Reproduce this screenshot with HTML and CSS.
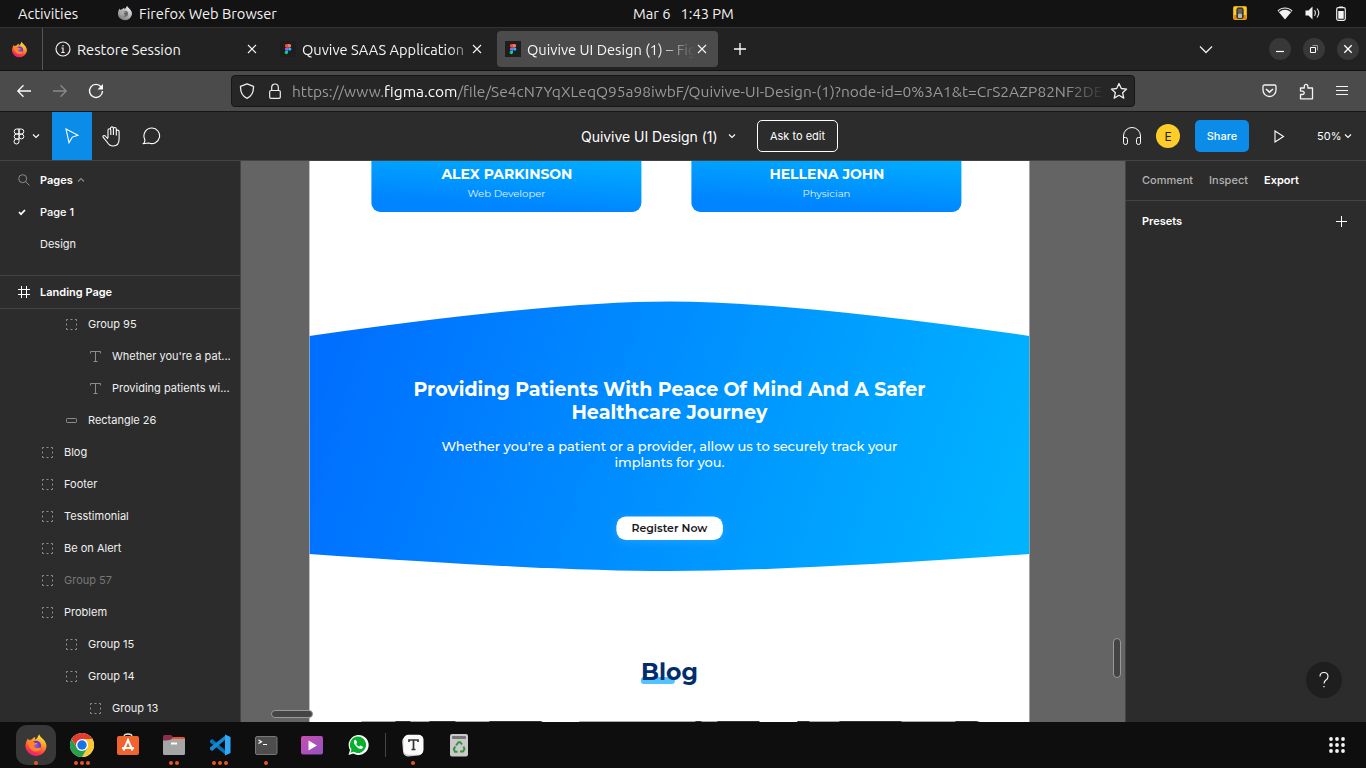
FILE: index.html
```html
<!DOCTYPE html>
<html lang="en">
<head>
<meta charset="utf-8">
<title>Quivive UI Design (1) – Figma</title>
<link rel="stylesheet" href="styles.css">
</head>
<body>
<svg width="0" height="0" class="defs" aria-hidden="true">
  <defs>
    <linearGradient id="fox" x1=".75" y1="0" x2=".3" y2="1"><stop offset="0" stop-color="#fff14a"/><stop offset=".4" stop-color="#ff9a1f"/><stop offset=".75" stop-color="#ff3a46"/><stop offset="1" stop-color="#e5178f"/></linearGradient>
    <linearGradient id="foxGrey" x1=".8" y1="0" x2=".2" y2="1"><stop offset="0" stop-color="#f4f4f4"/><stop offset="1" stop-color="#777"/></linearGradient>
    <radialGradient id="globe"><stop offset="0" stop-color="#9059ff"/><stop offset="1" stop-color="#5b33b8"/></radialGradient>
    <linearGradient id="banner" gradientUnits="userSpaceOnUse" x1="20" y1="30" x2="690" y2="255"><stop offset="0" stop-color="#006eff"/><stop offset=".5" stop-color="#0090ff"/><stop offset="1" stop-color="#00b3ff"/></linearGradient>
    <linearGradient id="video" x1="0" y1="0" x2="1" y2="1"><stop offset="0" stop-color="#c84fae"/><stop offset="1" stop-color="#9352c4"/></linearGradient>
    <symbol id="firefox" viewBox="0 0 24 24">
      <path d="M15.200 1.200c.4 1.800 1.700 2.700 3.200 4.200 2.600 2.300 4.100 5 4.100 8.100a10.600 10.300 0 0 1-21.100.2c0-3 .8-6 2.700-8.500l.6 2.200c1-.7 2-1 3.200-.9 1-1.500 2.300-2.200 3.600-2.500-.6 1-.7 1.800-.5 2.600 1.800-.6 2.700-2.800 4.200-5.400z" fill="url(#fox)"/>
      <circle cx="12" cy="12.800" r="5" fill="url(#globe)"/>
      <path d="M3.500 7.500c2.300-.8 5 .6 6.900 1.900 1 .6 2.200.5 3.200.4-.4 1.400-1.800 1.900-3.200 2.200-.6 1.900 1 3.300 3 3 1.600-.3 2.700-.4 3.500.4-1.500 2.700-4.500 3.700-7.600 2.500C5.700 16.300 4 12.500 3.500 7.500z" fill="#ff852b"/>
    </symbol>
    <symbol id="figma" viewBox="0 0 16 16">
      <rect width="16" height="16" fill="#1e1e1e"/>
      <path d="M8 3H6.500a1.700 1.700 0 0 0 0 3.400H8z" fill="#f24e1e"/><path d="M8 3h1.500a1.700 1.700 0 0 1 0 3.400H8z" fill="#ff7262"/>
      <path d="M8 6.400H6.500a1.700 1.700 0 0 0 0 3.400H8z" fill="#a259ff"/><circle cx="9.700" cy="8.100" r="1.700" fill="#1abcfe"/>
      <path d="M8 9.800H6.500A1.700 1.700 0 1 0 8 11.500z" fill="#0acf83"/>
    </symbol>
    <symbol id="close" viewBox="0 0 10 10"><path d="M1 1l8 8M9 1L1 9" fill="none" stroke="currentColor" stroke-width="1.100"/></symbol>
    <symbol id="chev" viewBox="0 0 8 6"><path d="M1 1.500l3 3 3-3" fill="none" stroke="currentColor" stroke-width="1.100"/></symbol>
    <symbol id="group" viewBox="0 0 11 11"><path d="M.5 2V.5H2M4.500 .5h2M9 .5h1.500V2M10.500 4.500v2M10.500 9v1.500H9M6.500 10.500h-2M2 10.500H.5V9M.5 6.500v-2" fill="none" stroke="#8c8c8c"/></symbol>
    <symbol id="text" viewBox="0 0 11 11"><path d="M.5 2.500v-2h10v2M5.500.5v10M3.500 10.500h4" fill="none" stroke="#8c8c8c"/></symbol>
  </defs>
</svg>

<header class="system">
  <span class="activities">Activities</span>
  <svg class="app-icon" width="16" height="16" viewBox="0 0 24 24"><path d="M15.200 1.200c.4 1.800 1.700 2.700 3.200 4.200 2.600 2.300 4.100 5 4.100 8.100a10.600 10.300 0 0 1-21.100.2c0-3 .8-6 2.700-8.500l.6 2.200c1-.7 2-1 3.200-.9 1-1.500 2.300-2.200 3.600-2.500-.6 1-.7 1.800-.5 2.600 1.800-.6 2.700-2.800 4.200-5.400z" fill="url(#foxGrey)"/><circle cx="12" cy="13" r="4.500" fill="#666"/><path d="M4 8.500c2.300-.8 4.600-.4 6.400.9 1 .6 2.200.5 3.200.4-.4 1.400-1.800 1.900-3.200 2.200-.6 1.900 1 3.300 3 3-5 3-9-1-9.400-6.500z" fill="#aaa"/></svg>
  <span class="app-name">Firefox Web Browser</span>
  <span class="clock">Mar 6&nbsp;&nbsp; 1:43 PM</span>
  <div class="tray">
    <svg width="14" height="14" viewBox="0 0 14 14"><rect width="14" height="14" rx="2" fill="#e9a511"/><path d="M1 1h3v12H1zM10 1h3v12h-3z" fill="#f5cf22"/><path d="M1 9h3v4H1zM10 9h3v4h-3z" fill="#e08a10"/><rect x="3.300" y="1.500" width="7.400" height="11.500" rx="2.500" fill="#3d3938"/><path d="M5 4h4M5 6h4" stroke="#888"/><rect x="5" y="7.500" width="4" height="4.500" rx="1" fill="#b9b9b9"/></svg>
    <svg class="wifi" width="16" height="13" viewBox="0 0 16 13"><path d="M.5 3.500C5-.5 11-.5 15.500 3.500L8 12.500z" fill="#f2f2f2"/><path d="M1.800 4.500C5.500 1.600 10.500 1.600 14.200 4.500" fill="none" stroke="#222" stroke-width="1.500"/></svg>
    <svg class="vol" width="16" height="14" viewBox="0 0 16 14"><path d="M.5 4.500h3L7.500.5v13L3.500 9.500h-3z" fill="#f2f2f2"/><path d="M9.500 4.200q1.800 2.800 0 5.600M12 2.500q3.500 4.500 0 9" fill="none" stroke="#ddd" stroke-width="1.200"/></svg>
    <svg class="bat" width="10" height="15" viewBox="0 0 10 15"><rect x=".7" y="1.700" width="8.600" height="12.600" rx="1.500" fill="none" stroke="#eee" stroke-width="1.200"/><path d="M3 .5h4v1.500H3zM2.300 5h5.400v7.700H2.300z" fill="#f4f4f4"/></svg>
  </div>
</header>

<nav class="tabs">
  <div class="pinned"><svg width="17" height="17"><use href="#firefox"/></svg></div>
  <div class="tab tab-a">
    <svg width="16" height="16" viewBox="0 0 16 16"><circle cx="8" cy="8" r="7" fill="none" stroke="#f0f0f0" stroke-width="1.200"/><path d="M6.300 7H8v4.200M6.300 11.500h3.400M8 4v1.500" stroke="#f0f0f0" stroke-width="1.200" fill="none"/></svg>
    <span class="tab-title">Restore Session</span>
    <svg width="10" height="10"><use href="#close"/></svg>
  </div>
  <div class="tab tab-b">
    <svg width="16" height="16"><use href="#figma"/></svg>
    <span class="tab-title fade">Quvive SAAS Application</span>
    <svg width="10" height="10"><use href="#close"/></svg>
  </div>
  <div class="tab tab-c">
    <svg width="16" height="16"><use href="#figma"/></svg>
    <span class="tab-title fade-long">Quivive UI Design (1) – Figma</span>
    <svg width="10" height="10"><use href="#close"/></svg>
  </div>
  <svg class="new-tab" width="12" height="12" viewBox="0 0 12 12"><path d="M6 0v12M0 6h12" stroke="#fff" stroke-width="1.300"/></svg>
  <svg class="all-tabs" width="14" height="9" viewBox="0 0 14 9"><path d="M1 1.500l6 6 6-6" fill="none" stroke="#eee" stroke-width="1.300"/></svg>
  <div class="win-buttons">
    <i><svg width="22" height="22"><path d="M7 13.500h8" stroke="#fff" stroke-width="1.200"/></svg></i>
    <i><svg width="22" height="22"><path d="M7.500 9.500h5v5h-5z" fill="none" stroke="#fff"/><path d="M9.500 7.500h5v5" fill="none" stroke="#999"/></svg></i>
    <i><svg width="22" height="22"><path d="M7.300 7.300l7.400 7.400M14.700 7.300l-7.400 7.400" stroke="#fff" stroke-width="1.300"/></svg></i>
  </div>
</nav>

<div class="address-bar">
  <div class="nav-buttons">
    <svg width="16" height="14" viewBox="0 0 16 14"><path d="M15 7H2M7.500 1.300L1.800 7l5.700 5.700" fill="none" stroke="#fbfbfe" stroke-width="1.300"/></svg>
    <svg width="16" height="14" viewBox="0 0 16 14"><path d="M1 7h13M8.500 1.300L14.200 7l-5.700 5.700" fill="none" stroke="#8a8a8a" stroke-width="1.300"/></svg>
    <svg width="16" height="16" viewBox="0 0 16 16"><path d="M13.200 4A6.500 6.500 0 1 0 14.500 8" fill="none" stroke="#fbfbfe" stroke-width="1.400"/><path d="M15 1v5.500H9.500z" fill="#fbfbfe"/></svg>
  </div>
  <div class="url">
    <svg width="16" height="16" viewBox="0 0 16 16"><path d="M8 .8l6.500 2.500c.2 6-1.800 10-6.500 12-4.700-2-6.700-6-6.500-12z" fill="none" stroke="#eee" stroke-width="1.300" stroke-linejoin="round"/></svg>
    <svg class="lock" width="14" height="16" viewBox="0 0 14 16"><rect x="1.700" y="7.500" width="10.600" height="7.800" rx="1.300" fill="none" stroke="#eee" stroke-width="1.200"/><path d="M3.700 7.500V4.300a3.300 3.300 0 0 1 6.600 0v3.200" fill="none" stroke="#eee" stroke-width="1.200"/></svg>
    <span class="url-text">https://www.<b>figma.com</b>/file/Se4cN7YqXLeqQ95a98iwbF/Quivive-UI-Design-(1)?node-id=0%3A1&amp;t=CrS2AZP82NF2DE</span>
    <svg width="18" height="18" viewBox="0 0 18 18"><path d="M9 1.500l2.300 5 5.300.6-4 3.600 1.200 5.400L9 13.300l-4.800 2.800 1.200-5.400-4-3.600 5.300-.6z" fill="none" stroke="#eee" stroke-width="1.300" stroke-linejoin="round"/></svg>
  </div>
  <div class="ff-actions">
    <svg width="15" height="14" viewBox="0 0 15 14"><path d="M2.500 1h10q1.500 0 1.500 1.500V6A6.500 6.500 0 0 1 1 6V2.500Q1 1 2.500 1z" fill="none" stroke="#f4f4f4" stroke-width="1.300"/><path d="M4 5l3.500 3.200L11 5" fill="none" stroke="#f4f4f4" stroke-width="1.600"/></svg>
    <svg width="15" height="17" viewBox="0 0 15 17"><path d="M1.500 5h3.800V3.200a1.800 1.800 0 0 1 3.600 0V5H13.500v10.800H1.500v-4.300h2a1.700 1.700 0 0 0 0-3.400H1.500z" fill="none" stroke="#f4f4f4" stroke-width="1.300" stroke-linejoin="round"/></svg>
    <svg width="12" height="12" viewBox="0 0 12 12"><path d="M0 1.500h12M0 5.500h12M0 9.500h12" stroke="#f4f4f4" stroke-width="1.200"/></svg>
  </div>
</div>

<div class="toolbar">
  <div class="menu-tool">
    <svg width="12" height="17" viewBox="0 0 12 17"><path d="M6 1H3.700a2.500 2.500 0 0 0 0 5H6zM6 1h2.300a2.500 2.500 0 0 1 0 5H6zM6 6H3.700a2.500 2.500 0 0 0 0 5H6zM3.700 11A2.500 2.500 0 1 0 6 13.500V11z" fill="none" stroke="#fff"/><circle cx="8.400" cy="8.500" r="2.400" fill="none" stroke="#fff"/></svg>
    <svg width="8" height="6"><use href="#chev"/></svg>
  </div>
  <div class="move-tool"><svg width="14" height="16" viewBox="0 0 14 16"><path d="M1 1l12 6.300-5.700 1.800L4 14.700z" fill="none" stroke="#fff" stroke-width="1.100"/></svg></div>
  <svg class="hand" width="20" height="21" viewBox="0 0 20 21"><path d="M6 12V4.200a1.400 1.400 0 0 1 2.800 0V9M8.500 4V2.300a1.400 1.400 0 0 1 2.900 0V9M11.400 3a1.400 1.400 0 0 1 2.900 0v6.500M14.300 5.500a1.400 1.400 0 0 1 2.800 0V13c0 4-2 7-6 7-3 0-4.500-1.300-6-4L1.200 11.400C.5 9.800 2 8.800 3.300 10L6 13" fill="none" stroke="#fff" stroke-width="1.100" stroke-linejoin="round"/></svg>
  <svg class="bubble" width="19" height="18" viewBox="0 0 19 18"><path d="M10 1a7.800 7.800 0 1 1-3.200 15L1 16.700c2-1 2.200-3 1.500-5A7.800 7.800 0 0 1 10 1z" fill="none" stroke="#fff" stroke-width="1.100" stroke-linejoin="round"/></svg>
  <span class="doc-title">Quivive UI Design (1)</span>
  <svg class="doc-chev" width="8" height="6"><use href="#chev"/></svg>
  <span class="ask">Ask to edit</span>
  <div class="right-tools">
    <svg width="20" height="19" viewBox="0 0 20 19"><path d="M1.500 12V9a8.500 8.500 0 0 1 17 0v3M1.500 10.500h2q2 0 2 2v3.200q0 1.800-2 1.800-2 0-2-1.800zM18.500 10.500h-2q-2 0-2 2v3.200q0 1.800 2 1.800 2 0 2-1.800z" fill="none" stroke="#fff"/></svg>
    <span class="avatar">E</span>
    <span class="share">Share</span>
    <svg class="play" width="11" height="13" viewBox="0 0 11 13"><path d="M1 1l8.500 5.500L1 12z" fill="none" stroke="#fff" stroke-width="1.100"/></svg>
    <span class="zoom-level">50%</span>
    <svg width="8" height="6"><use href="#chev"/></svg>
  </div>
</div>

<main class="workspace">
  <aside class="layers">
    <div class="pages">
      <div class="row root bold"><svg width="12" height="12" viewBox="0 0 12 12"><circle cx="4.700" cy="4.700" r="4" fill="none" stroke="#8c8c8c"/><path d="M7.500 7.500l4 4" stroke="#8c8c8c"/></svg><span>Pages</span><svg class="up" width="8" height="6"><use href="#chev"/></svg></div>
      <div class="row root semi"><svg width="12" height="12" viewBox="0 0 12 12"><path d="M1 6l2 2.200 4-4.200" fill="none" stroke="#fff" stroke-width="1.700"/></svg><span>Page 1</span></div>
      <div class="row root"><svg width="12" height="12"></svg><span>Design</span></div>
    </div>
    <div class="frame-row"><svg width="12" height="12" viewBox="0 0 12 12"><path d="M3.500 0v12M8.500 0v12M0 3.500h12M0 8.500h12" stroke="#fff"/></svg><span>Landing Page</span></div>
    <div class="tree">
      <div class="row l2"><svg width="11" height="11"><use href="#group"/></svg><span>Group 95</span></div>
      <div class="row l3"><svg width="11" height="11"><use href="#text"/></svg><span>Whether you're a pat...</span></div>
      <div class="row l3"><svg width="11" height="11"><use href="#text"/></svg><span>Providing patients wi...</span></div>
      <div class="row l2"><svg width="11" height="11" viewBox="0 0 11 11"><rect x=".5" y="3.500" width="10" height="4" rx=".8" fill="none" stroke="#8c8c8c"/></svg><span>Rectangle 26</span></div>
      <div class="row l1"><svg width="11" height="11"><use href="#group"/></svg><span>Blog</span></div>
      <div class="row l1"><svg width="11" height="11"><use href="#group"/></svg><span>Footer</span></div>
      <div class="row l1"><svg width="11" height="11"><use href="#group"/></svg><span>Tesstimonial</span></div>
      <div class="row l1"><svg width="11" height="11"><use href="#group"/></svg><span>Be on Alert</span></div>
      <div class="row l1 hidden-layer"><svg width="11" height="11"><use href="#group"/></svg><span>Group 57</span></div>
      <div class="row l1"><svg width="11" height="11"><use href="#group"/></svg><span>Problem</span></div>
      <div class="row l2"><svg width="11" height="11"><use href="#group"/></svg><span>Group 15</span></div>
      <div class="row l2"><svg width="11" height="11"><use href="#group"/></svg><span>Group 14</span></div>
      <div class="row l3"><svg width="11" height="11"><use href="#group"/></svg><span>Group 13</span></div>
    </div>
  </aside>

  <section class="canvas">
    <div class="artboard">
      <div class="people">
        <div class="person"><svg width="270" height="51"><text class="name" x="70" y="18" textLength="131" lengthAdjust="spacingAndGlyphs">ALEX PARKINSON</text><text class="role" x="96" y="36" textLength="78" lengthAdjust="spacingAndGlyphs">Web Developer</text></svg></div>
        <div class="person"><svg width="270" height="51"><text class="name" x="78" y="18" textLength="115" lengthAdjust="spacingAndGlyphs">HELLENA JOHN</text><text class="role" x="111" y="36" textLength="48" lengthAdjust="spacingAndGlyphs">Physician</text></svg></div>
      </div>
      <svg class="banner" width="720" height="271" viewBox="0 0 720 271">
        <path d="M0 35Q240 .5 360 .5T720 35V253Q480 270 360 270T0 253z" fill="url(#banner)"/>
        <text class="headline" x="104" y="95" textLength="512" lengthAdjust="spacingAndGlyphs">Providing Patients With Peace Of Mind And A Safer</text>
        <text class="headline" x="262" y="117.500" textLength="196" lengthAdjust="spacingAndGlyphs">Healthcare Journey</text>
        <text class="copy" x="132" y="150" textLength="456" lengthAdjust="spacingAndGlyphs">Whether you're a patient or a provider, allow us to securely track your</text>
        <text class="copy" x="305" y="166" textLength="110" lengthAdjust="spacingAndGlyphs">implants for you.</text>
        <rect class="cta" x="307" y="215.500" width="106.500" height="23.500" rx="9.500"/>
        <text class="cta-label" x="322" y="231" textLength="76" lengthAdjust="spacingAndGlyphs">Register Now</text>
      </svg>
      <svg class="blog" width="720" height="151">
        <rect x="331.500" y="105" width="34" height="7" rx="3" fill="#56c1ff"/>
        <text class="blog-title" x="331.500" y="108" textLength="57" lengthAdjust="spacingAndGlyphs">Blog</text>
        <path d="M52 149.500h181M270 149.500h180M488 149.500h182" stroke="#aaa"/>
        <path d="M86 149.500h15M120 149.500h26M180 149.500h52M386 149.500h6M408 149.500h42M488 149.500h12M530 149.500h62M646 149.500h22" stroke="#333" />
      </svg>
    </div>
    <i class="scroll-x"></i>
    <i class="scroll-y"></i>
  </section>

  <aside class="inspector">
    <div class="inspector-tabs"><span>Comment</span><span>Inspect</span><span class="on">Export</span></div>
    <div class="presets"><span>Presets</span><svg width="11" height="11"><path d="M5.500 0v11M0 5.500h11" stroke="#fff"/></svg></div>
    <span class="help"><svg width="36" height="36"><path d="M14 14.500q0-4 4-4t4 4q0 2-2 3.500t-2 3.500" fill="none" stroke="#fff" stroke-width="1.100"/><path d="M17.400 24h1.200v1.300h-1.200z" fill="#fff"/></svg></span>
  </aside>
</main>

<footer class="dock">
  <div class="app active"><svg width="24" height="24"><use href="#firefox"/></svg><em><b></b></em></div>
  <div class="app"><svg width="24" height="24" viewBox="0 0 24 24"><circle cx="12" cy="12" r="12" fill="#fff"/><path d="M1.600 6A12 12 0 0 1 22.400 6L12 6.500 7 15z" fill="#e33b2e"/><path d="M22.400 6A12 12 0 0 1 12 24L17.200 15 17 8 12 6z" fill="#fcc934"/><path d="M1.600 6A12 12 0 0 0 12 24L17 15.500 7 15z" fill="#2a9d4a"/><circle cx="12" cy="12" r="6" fill="#fff"/><circle cx="12" cy="12" r="4.700" fill="#1a73e8"/></svg><em><b></b><b></b><b></b></em></div>
  <div class="app"><svg width="24" height="24" viewBox="0 0 24 24"><path d="M8 3.500Q8 1 12 1t4 2.500" fill="none" stroke="#eee5d0" stroke-width="1.300"/><rect x="1" y="3" width="22" height="19" rx="2" fill="#f0652e"/><path d="M7.500 17.500L12 7l4.500 10.500M6 15h12" fill="none" stroke="#fff" stroke-width="2"/></svg><em></em></div>
  <div class="app"><svg width="24" height="24" viewBox="0 0 24 24"><path d="M1 3.500Q1 2 2.500 2H9l2 2h10.500Q23 4 23 5.500V12H1z" fill="#8b2d4c"/><path d="M11 4h10.500Q23 4 23 5.500V8H8z" fill="#e95428"/><path d="M1 7.500q6 0 9-1.500h13v14.500q0 1.500-1.500 1.500h-19Q1 22 1 20.500z" fill="#a6a6a6"/><path d="M9 10.500h6" stroke="#fff" stroke-width="2"/></svg><em><b></b><b></b></em></div>
  <div class="app"><svg width="24" height="24" viewBox="0 0 24 24"><path d="M2 7.500L4.200 6 18 18v4L2 9.500z" fill="#0873bd"/><path d="M2 16.500L4.200 18 18 6V2L2 14.500z" fill="#1688d3"/><path d="M17 1.500L22.500 4v16L17 22.500z" fill="#31a9f4"/></svg><em><b></b><b></b><b></b></em></div>
  <div class="app"><svg width="24" height="24" viewBox="0 0 24 24"><rect x="1.500" y="3.500" width="21.500" height="18" rx="1.500" fill="#4d4d4d" stroke="#777"/><path d="M4.500 7l3 1.800-3 1.800M9 11.500h4" fill="none" stroke="#fff" stroke-width="1.200"/></svg><em><b></b></em></div>
  <div class="app"><svg width="24" height="24" viewBox="0 0 24 24"><rect x="1" y="3" width="22" height="18.500" rx="2" fill="url(#video)"/><path d="M8.500 7.500l8.500 5-8.500 5z" fill="#fff"/></svg><em></em></div>
  <div class="app"><svg width="24" height="24" viewBox="0 0 24 24"><path d="M12 2a10 10 0 1 1-4.600 18.500L2.500 22 4 17A10 10 0 0 1 12 2z" fill="#fff"/><path d="M12 3.600a8.200 8.200 0 1 1-4.400 15.200L4.500 19.700l1-3A8.200 8.200 0 0 1 12 3.600z" fill="#08ae2d"/><path d="M8.700 7c-1.500 1.200-1 3.500 1.200 6 2.500 2.600 5 3.800 6.600 2.200.8-.9.500-1.500 0-1.700l-1.700-.9c-.7-.3-1 .7-1.600 1-1 0-2.800-1.800-3-2.900.8-.7 1-1 .7-1.700l-.7-1.600C10 6.700 9.300 6.700 8.700 7z" fill="#fff"/></svg><em></em></div>
  <i class="divider"></i>
  <div class="app"><svg width="24" height="24" viewBox="0 0 24 24"><rect x="1.500" y="3" width="20" height="20" rx="5" fill="#ccc" transform="rotate(-5 12 12)"/><rect x="2.500" y="1.800" width="20" height="20" rx="5" fill="#fafafa"/><path d="M8 9V7h9v2M12.500 7v9.500M10.500 16.500h4" fill="none" stroke="#333" stroke-width="1.700"/></svg><em><b></b></em></div>
  <div class="app"><svg width="24" height="24" viewBox="0 0 24 24"><rect x="3" y="1" width="18" height="22.500" rx="2" fill="#c9c9c9"/><rect x="5" y="3" width="14" height="3" rx="1" fill="#777"/><path d="M9 12.500l2.500-3.300h1.800l1.700 2.300M16.500 13.500l1 2.500-1.500 2.500h-3M10.500 18.800H8L6.800 16l1.500-2.500" fill="none" stroke="#36943c" stroke-width="2"/></svg><em></em></div>
  <svg class="grid" width="16" height="16" fill="#f4f4f4"><g id="dots"><circle cx="2" cy="2" r="1.900"/><circle cx="8" cy="2" r="1.900"/><circle cx="14" cy="2" r="1.900"/></g><use href="#dots" y="6"/><use href="#dots" y="12"/></svg>
</footer>
</body>
</html>
```
FILE: styles.css
```css
* { box-sizing: border-box; }
body { margin: 0; width: 1366px; height: 768px; overflow: hidden; display: flex; flex-direction: column; background: #2c2c2c; color: #fff; font-family: Inter, "Liberation Sans", sans-serif; font-size: 11px; }
svg { display: block; flex: none; }
.defs { position: absolute; }

.system, .tabs, .address-bar { font-family: Ubuntu, "Noto Sans", sans-serif; font-size: 14.670px; white-space: nowrap; }
.system { position: relative; height: 28px; flex: none; display: flex; align-items: center; padding: 0 20px 1px 18px; background: #131313; border-bottom: 1px solid #333; color: #f2f2f2; }
.activities { width: 99px; }
.app-name { margin-left: 6px; }
.clock { position: absolute; left: 633px; top: 5px; line-height: 17px; }
.tray { margin-left: auto; display: flex; align-items: center; }
.wifi { margin-left: 30px; }
.vol { margin-left: 12px; }
.bat { margin-left: 15px; }

.tabs { height: 43px; flex: none; display: flex; align-items: center; background: #222; border-bottom: 1px solid #111; color: #f5f5f5; padding-right: 7px; }
.pinned { width: 43px; height: 100%; border-right: 1px solid #555; display: flex; align-items: center; padding-left: 11px; }
.tab { display: flex; align-items: center; height: 36px; border-radius: 4px; }
.tab-title { flex: 1; overflow: hidden; margin: 0 2px 0 6px; }
.tab-a { width: 226px; padding: 0 12px 0 12px; }
.tab-b { width: 228px; padding: 0 15px 0 11px; }
.tab-c { width: 221px; padding: 0 11px 0 8px; background: #4b4b4b; }
.tab-b .tab-title { margin-right: 4px; }
.fade { -webkit-mask-image: linear-gradient(90deg, #000 88%, transparent 105%); mask-image: linear-gradient(90deg, #000 88%, transparent 105%); }
.fade-long { -webkit-mask-image: linear-gradient(90deg, #000 78%, transparent); mask-image: linear-gradient(90deg, #000 78%, transparent); }
.new-tab { margin-left: 16px; }
.all-tabs { margin-left: auto; }
.win-buttons { display: flex; gap: 12px; margin-left: 56px; }
.win-buttons i { width: 22px; height: 22px; border-radius: 50%; background: #383838; }

.address-bar { height: 41px; flex: none; display: flex; align-items: center; background: #4b4b4b; border-bottom: 1px solid #161616; padding: 0 18px 0 16px; }
.nav-buttons { width: 215px; display: flex; align-items: center; gap: 20px; }
.url { width: 904px; height: 32px; display: flex; align-items: center; border: 1px solid #161616; border-radius: 4px; background: #262626; color: #999; padding: 0 6px 0 7px; }
.lock { margin-left: 13px; }
.url-text { flex: 1; font-size: 15.500px; overflow: hidden; margin: 0 4px 0 10px; -webkit-mask-image: linear-gradient(90deg, #000 95%, transparent); mask-image: linear-gradient(90deg, #000 95%, transparent); }
.url-text b { font-weight: 400; color: #fbfbfe; }
.ff-actions { margin-left: auto; display: flex; align-items: center; gap: 22px; }

.toolbar { position: relative; height: 49px; flex: none; display: flex; align-items: center; background: #2c2c2c; border-bottom: 1px solid #444; }
.menu-tool { width: 52px; display: flex; align-items: center; gap: 7px; padding-left: 13px; }
.move-tool { width: 40px; height: 48px; background: #0c8ce9; display: flex; align-items: center; justify-content: center; }
.hand { margin-left: 10px; }
.bubble { margin-left: 20px; }
.doc-title { margin-left: 420px; width: 137px; font-size: 14px; letter-spacing: -.03px; white-space: nowrap; }
.doc-chev { margin-left: 10px; }
.ask { margin-left: 21px; width: 81px; height: 32px; border: 1px solid #fff; border-radius: 5px; line-height: 30px; text-align: center; }
.right-tools { margin-left: auto; display: flex; align-items: center; padding-right: 14px; }
.avatar { width: 24px; height: 24px; margin-left: 14px; border-radius: 50%; background: #ffcd29; color: #222; line-height: 25px; text-align: center; font-size: 12px; }
.share { width: 54px; height: 32px; margin-left: 15px; border-radius: 5px; background: #0c8ce9; line-height: 32px; text-align: center; font-weight: 500; }
.play { margin-left: 25px; }
.zoom-level { margin: 0 5px 0 32px; width: 22px; }

.workspace { height: 561px; flex: none; display: flex; overflow: hidden; }
.layers { width: 241px; border-right: 1px solid #444; color: #f0f0f0; overflow: hidden; }
.pages { height: 115px; padding-top: 3px; border-bottom: 1px solid #444; }
.row { height: 32px; display: flex; align-items: center; white-space: nowrap; }
.row span { margin-left: 10px; }
.root { padding-left: 18px; }
.tree { margin-top: -1px; }
.tree svg { margin-left: -1px; margin-right: 1px; }
.l1 { padding-left: 43px; }
.l2 { padding-left: 67px; }
.l3 { padding-left: 91px; }
.bold, .frame-row { font-weight: 600; color: #fff; }
.semi { font-weight: 500; color: #fff; }
.up { margin-left: 4px; transform: rotate(180deg); color: #8c8c8c; }
.frame-row { height: 33px; display: flex; align-items: center; gap: 10px; padding-left: 18px; border-bottom: 1px solid #444; }
.hidden-layer span { color: #777; }

.canvas { position: relative; width: 884px; background: #646464; overflow: hidden; padding-left: 68px; }
.artboard { width: 720px; height: 561px; background: #fff; transform: translateX(.4px); }
.people { display: flex; gap: 50px; height: 140px; padding-left: 62px; }
.person { width: 270px; height: 51px; border-radius: 0 0 9px 9px; background: linear-gradient(184deg, #00aeff, #0084ff 80%); }
.artboard text { font-family: Montserrat, Inter, sans-serif; fill: #fff; }
.artboard .name { font-size: 13.500px; font-weight: 700; }
.artboard .role { font-size: 9.700px; font-weight: 400; fill: #e0f2ff; }
.artboard .headline { font-size: 19.500px; font-weight: 700; }
.artboard .copy { font-size: 13px; font-weight: 500; }
.cta { fill: #fff; filter: drop-shadow(0 2px 4px rgba(50, 170, 255, .6)); }
.artboard .cta-label { fill: #18181c; font-size: 11px; font-weight: 600; }
.artboard .blog-title { fill: #012d6d; font-size: 24px; font-weight: 700; }
.scroll-x { position: absolute; left: 30px; top: 549px; width: 42px; height: 8px; border: 1px solid #999; border-radius: 4px; background: #444; }
.scroll-y { position: absolute; left: 872px; top: 477px; width: 8px; height: 40px; border: 1px solid #999; border-radius: 4px; background: #444; }

.inspector { position: relative; flex: 1; border-left: 1px solid #444; }
.inspector-tabs { height: 40px; border-bottom: 1px solid #444; display: flex; align-items: center; gap: 16px; padding: 0 0 2px 16px; color: #b3b3b3; font-weight: 500; }
.inspector-tabs .on { color: #fff; font-weight: 600; }
.presets { height: 40px; display: flex; align-items: center; justify-content: space-between; padding: 0 19px 0 16px; font-weight: 600; }
.help { position: absolute; right: 24px; bottom: 24px; width: 36px; height: 36px; border-radius: 50%; background: #1e1e1e; }

.dock { position: relative; height: 46px; flex: none; display: flex; align-items: flex-start; background: #0e0e0e; padding: 3px 21px 0 16px; gap: 6px; }
.app { width: 40px; height: 40px; border-radius: 11px; padding-top: 8px; display: flex; flex-direction: column; align-items: center; justify-content: space-between; }
.active { background: #383838; }
.app em { display: flex; gap: 2px; height: 4px; }
.app b { width: 4px; height: 4px; border-radius: 50%; background: #e95420; }
.divider { width: 1px; height: 24px; background: #444; margin: 8px 1px 0; }
.grid { margin: 12px 0 0 auto; }
```
